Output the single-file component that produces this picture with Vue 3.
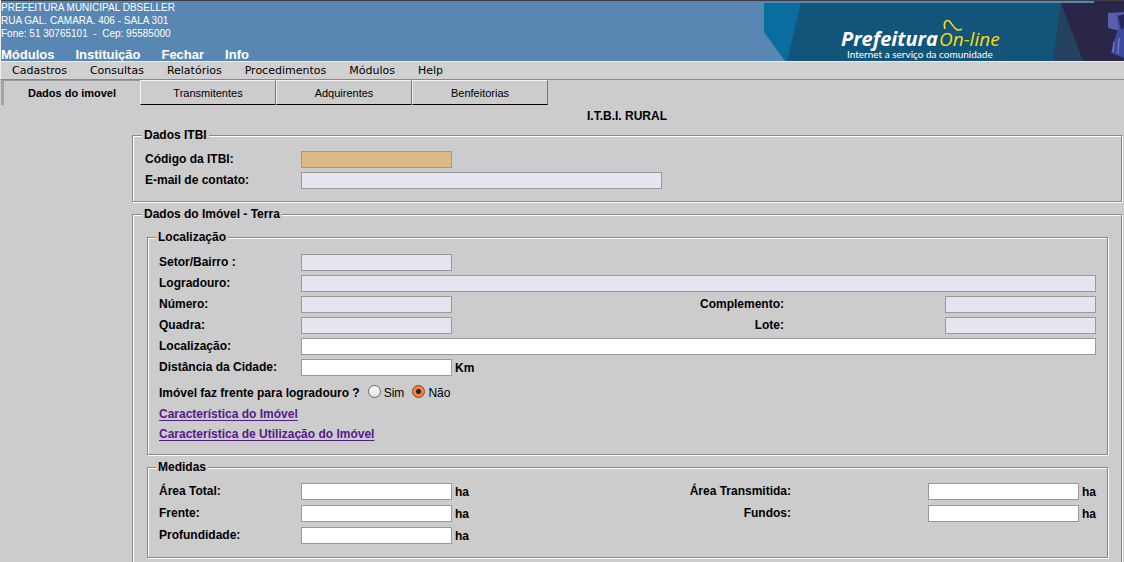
<script setup>
import { ref } from 'vue'

const links = ['Módulos', 'Instituição', 'Fechar', 'Info']
const menus = ['Cadastros', 'Consultas', 'Relatórios', 'Procedimentos', 'Módulos', 'Help']
const tabs = ['Dados do imovel', 'Transmitentes', 'Adquirentes', 'Benfeitorias']
const active = ref(0)
const frente = ref('nao')
</script>

<template>
  <div class="page">
    <header class="top">
      <div class="info">
        <p>PREFEITURA MUNICIPAL DBSELLER</p>
        <p>RUA GAL. CAMARA. 406 - SALA 301</p>
        <p>Fone: 51 30765101 &nbsp;- &nbsp;Cep: 95585000</p>
        <nav class="links">
          <a v-for="l in links" :key="l" href="#">{{ l }}</a>
        </nav>
      </div>
      <svg class="banner" width="360" height="61" viewBox="0 0 360 61" role="img" aria-label="Prefeitura On-line">
        <defs>
          <filter id="soft"><feGaussianBlur stdDeviation="0.7" /></filter>
        </defs>
        <rect y="3" width="360" height="58" fill="#13547a" />
        <path d="M0 3H37L23 61H21L0 32Z" fill="#0a6d9f" />
        <path d="M0 32L21 61H0Z" fill="#5987b3" />
        <path d="M297 3L319 61H289Z" fill="#24415f" />
        <path d="M297 3H330V1H360V61H319Z" fill="#292647" />
        <g filter="url(#soft)">
          <path d="M344 13L360 12V30H352L344 28Z" fill="#565fa9" />
          <path d="M352 13L360 20V58L347 53L351 37L355 27Z" fill="#3d489c" />
          <path d="M354 16L360 14V28L357 29Z" fill="#25265f" />
          <path d="M350 42L349 52M355 38L354 54" stroke="#7078bd" stroke-width="1.5" />
        </g>
        <text x="77" y="46" class="brand">Prefeitura</text>
        <text x="175" y="46" class="online">On-line</text>
        <path d="M181 29C179 23 182 19 185 21C189 24 191 33 198 29" fill="none" stroke="#f5dc10" stroke-width="1.6" />
        <text x="83" y="58" class="slogan">Internet a serviço da comunidade</text>
      </svg>
    </header>

    <nav class="menu">
      <a v-for="m in menus" :key="m" href="#">{{ m }}</a>
    </nav>

    <div class="tabs">
      <button v-for="(t, i) in tabs" :key="t" type="button" :class="{ active: active === i }" @click="active = i">{{ t }}</button>
    </div>

    <form class="content" @submit.prevent>
      <h1>I.T.B.I. RURAL</h1>

      <fieldset class="section">
        <legend>Dados ITBI</legend>
        <div class="row wide">
          <label for="codigo">Código da ITBI:</label>
          <input id="codigo" class="field key" type="text" readonly />
        </div>
        <div class="row wide">
          <label for="email">E-mail de contato:</label>
          <input id="email" class="field locked long" type="text" readonly />
        </div>
      </fieldset>

      <fieldset class="section outer">
        <legend>Dados do Imóvel - Terra</legend>

        <fieldset class="group location">
          <legend>Localização</legend>
          <div class="row">
            <label for="setor">Setor/Bairro :</label>
            <input id="setor" class="field locked" type="text" readonly />
          </div>
          <div class="row">
            <label for="logradouro">Logradouro:</label>
            <input id="logradouro" class="field locked full" type="text" readonly />
          </div>
          <div class="row">
            <label for="numero">Número:</label>
            <input id="numero" class="field locked" type="text" readonly />
            <label class="right" for="complemento">Complemento:</label>
            <span class="end"><input id="complemento" class="field locked" type="text" readonly /></span>
          </div>
          <div class="row">
            <label for="quadra">Quadra:</label>
            <input id="quadra" class="field locked" type="text" readonly />
            <label class="right" for="lote">Lote:</label>
            <span class="end"><input id="lote" class="field locked" type="text" readonly /></span>
          </div>
          <div class="row">
            <label for="localizacao">Localização:</label>
            <input id="localizacao" class="field full" type="text" />
          </div>
          <div class="row">
            <label for="distancia">Distância da Cidade:</label>
            <input id="distancia" class="field" type="text" /><span class="unit">Km</span>
          </div>
          <div class="question" role="radiogroup" aria-labelledby="pergunta">
            <span id="pergunta">Imóvel faz frente para logradouro ?</span>
            <label><input v-model="frente" type="radio" name="frente" value="sim" />Sim</label>
            <label><input v-model="frente" type="radio" name="frente" value="nao" />Não</label>
          </div>
          <p class="more"><a href="#">Característica do Imóvel</a></p>
          <p class="more"><a href="#">Característica de Utilização do Imóvel</a></p>
        </fieldset>

        <fieldset class="group measures">
          <legend>Medidas</legend>
          <div class="row">
            <label for="total">Área Total:</label>
            <input id="total" class="field" type="text" /><span class="unit">ha</span>
            <label class="right" for="transmitida">Área Transmitida:</label>
            <span class="end"><input id="transmitida" class="field" type="text" /><span class="unit">ha</span></span>
          </div>
          <div class="row">
            <label for="frente-m">Frente:</label>
            <input id="frente-m" class="field" type="text" /><span class="unit">ha</span>
            <label class="right" for="fundos">Fundos:</label>
            <span class="end"><input id="fundos" class="field" type="text" /><span class="unit">ha</span></span>
          </div>
          <div class="row">
            <label for="profundidade">Profundidade:</label>
            <input id="profundidade" class="field" type="text" /><span class="unit">ha</span>
          </div>
        </fieldset>
      </fieldset>
    </form>
  </div>
</template>

<style>
html {
  background: #ccc;
  scrollbar-width: none;
}
body {
  margin: 0;
}
</style>

<style scoped>
.page {
  font: bold 12px/17px "Liberation Sans", Arial, sans-serif;
  color: #000;
  background: #ccc;
}
.page p {
  margin: 0;
}
.top {
  display: flex;
  justify-content: space-between;
  height: 61px;
  background: linear-gradient(#3a3c46 0 1px, #5987b3 1px);
  border-left: 1px solid #eee;
  color: #fff;
}
.info {
  padding-top: 1px;
  font-size: 10px;
  font-weight: normal;
  line-height: 13px;
}
.links {
  display: flex;
  gap: 21px;
  padding-top: 7px;
  font-size: 13px;
  font-weight: bold;
  line-height: 16px;
}
.links a {
  color: #fff;
  text-decoration: none;
}
.banner {
  display: block;
  flex: none;
}
.brand {
  font: italic bold 20px "Open Sans", sans-serif;
  fill: #fff;
}
.online {
  font: italic 19px "Open Sans", sans-serif;
  fill: #f5dc10;
}
.slogan {
  font: 10px Lato, sans-serif;
  fill: #fff;
}
.menu {
  display: flex;
  gap: 23px;
  height: 17px;
  padding-left: 11px;
  border-left: 1px solid #eee;
  border-top: 1px solid #eee;
  border-bottom: 1px solid #888;
  background: #d0d0d0;
  font: 11px/17px "DejaVu Sans", sans-serif;
}
.menu a {
  color: #000;
  text-decoration: none;
}
.tabs {
  display: flex;
  padding-left: 1px;
}
.tabs button {
  width: 136px;
  height: 25px;
  padding: 0;
  border: 1px solid;
  border-color: #f4f4f4 #777 #000 #f4f4f4;
  background: #ccc;
  color: #000;
  font: 11px "Liberation Sans", Arial, sans-serif;
}
.tabs .active {
  width: 139px;
  border: 0;
  border-top: 1px solid #999;
  border-left: 3px solid #a4a4a4;
  font-weight: bold;
}
.content {
  margin: 0 2px 0 132px;
}
h1 {
  margin: 0;
  padding: 3px 0 4px;
  font-size: 12px;
  line-height: 17px;
  text-align: center;
}
fieldset {
  min-width: 0;
  margin: 0;
  border: 1px solid #888;
  box-shadow: 1px 1px #fff, inset 1px 1px #fff;
}
legend {
  padding: 0 2px;
  background: #ccc;
  line-height: 13px;
}
.section {
  margin-bottom: 6px;
  padding: 9px 13px 12px 9px;
}
.outer {
  padding-top: 10px;
}
.group {
  margin-left: 5px;
  padding: 9px 11px 13px 8px;
}
.location {
  margin-bottom: 6px;
  padding-top: 10px;
  padding-bottom: 10px;
}
.row {
  display: flex;
  align-items: center;
  height: 17px;
  padding-left: 3px;
}
.row + .row {
  margin-top: 4px;
}
.measures .row + .row {
  margin-top: 5px;
}
.row > label:first-child {
  flex: none;
  width: 142px;
}
.row.wide > label:first-child {
  width: 156px;
}
.field {
  box-sizing: border-box;
  flex: none;
  width: 151px;
  height: 17px;
  margin: 0;
  padding: 0 2px;
  border: 1px solid #999;
  border-radius: 0;
  background: #fff;
  font: 12px "Liberation Sans", Arial, sans-serif;
}
.locked {
  background: #e6e4f1;
}
.key {
  background: #deb887;
}
.long {
  width: 361px;
}
.full {
  flex: 1;
}
.right {
  flex: 1;
  text-align: right;
}
.end {
  display: flex;
  align-items: center;
  justify-content: flex-end;
  width: 312px;
}
.measures .end {
  width: 305px;
}
.unit {
  padding: 2px 0 0 3px;
  line-height: 15px;
}
.question {
  display: flex;
  box-sizing: border-box;
  align-items: center;
  gap: 8px;
  height: 28px;
  padding: 6px 0 0 3px;
}
.question label {
  display: flex;
  align-items: center;
  gap: 3px;
  font-weight: normal;
}
.question input {
  appearance: none;
  width: 13px;
  height: 13px;
  margin: 0 0 3px;
  border: 1px solid #666;
  border-radius: 50%;
  background: linear-gradient(#fff, #ddd);
}
.question input:checked {
  border-color: #8a3f20;
  background: radial-gradient(circle, #222 0 2px, #f2834a 3px);
}
.more {
  padding-left: 3px;
  line-height: 20px;
}
.more a {
  color: #551a8b;
  text-underline-offset: 2px;
}
</style>
